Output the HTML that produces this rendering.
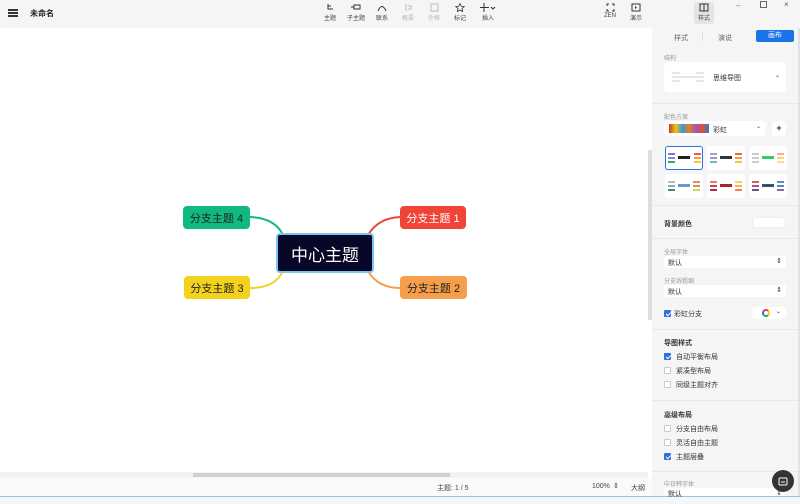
<!DOCTYPE html>
<html><head><meta charset="utf-8"><style>
*{box-sizing:border-box;margin:0;padding:0}
body{width:800px;height:504px;overflow:hidden;font-family:"Liberation Sans","Noto Sans CJK SC",sans-serif;background:#fff;position:relative;color:#333}
.a{position:absolute}
.top{left:0;top:0;width:800px;height:28px;background:#f5f5f5}
.tb{position:absolute;top:3px;font-size:6px;color:#444;text-align:center;width:20px}
.tb svg{display:block;margin:0 auto 1px}
.dis{color:#bbb}
.panel{left:652px;top:28px;width:146px;height:468px;background:#f5f5f5}
.card{position:absolute;background:#fff;border-radius:4px}
.lbl{position:absolute;font-size:6px;color:#999}
.txt{position:absolute;font-size:7px;color:#333}
.sel{position:absolute;left:12px;width:122px;height:12px;background:#fff;border-radius:3px;font-size:7px;padding:2px 4px}
.sel::after{content:"⇕";position:absolute;right:4px;top:1px;font-size:7px}
.cb{position:absolute;left:12px;width:7px;height:7px;border:1px solid #ccc;border-radius:1px;background:#fff}
.cb.on{background:#2d6fdf;border-color:#2d6fdf}
.cb.on::after{content:"";position:absolute;left:1.5px;top:0;width:2px;height:4px;border:solid #fff;border-width:0 1px 1px 0;transform:rotate(45deg)}
.sep{position:absolute;left:0;width:146px;height:1px;background:#e8e8e8}
.node{position:absolute;border-radius:4px;font-size:11px;display:flex;align-items:center;justify-content:center}
.th{position:absolute;width:38px;height:24px;background:#fff;border-radius:3px}
.th i{position:absolute;width:7px;height:2px}
</style></head><body>
<div class="a top">
 <div class="a" style="left:8px;top:9px;width:10px;height:1.5px;background:#333;box-shadow:0 3px 0 #333,0 6px 0 #333"></div>
 <div class="a" style="left:30px;top:8px;font-size:8px;font-weight:bold;color:#222">未命名</div>
 <div class="tb" style="left:320px"><svg width="9" height="9"><path d="M2 1v5h5M2 3h3" stroke="#333" fill="none"/></svg>主题</div>
 <div class="tb" style="left:346px"><svg width="10" height="9"><rect x="3" y="2" width="6" height="4" fill="none" stroke="#333"/><path d="M0 4h3" stroke="#333"/></svg>子主题</div>
 <div class="tb" style="left:372px"><svg width="10" height="9"><path d="M1 8Q5 -1 9 8" fill="none" stroke="#333"/></svg>联系</div>
 <div class="tb dis" style="left:398px"><svg width="9" height="9"><path d="M2 1v7M4 3h3v3H4" stroke="#bbb" fill="none"/></svg>概要</div>
 <div class="tb dis" style="left:424px"><svg width="9" height="9"><rect x="1" y="1" width="7" height="7" stroke="#bbb" fill="none"/></svg>外框</div>
 <div class="tb" style="left:450px"><svg width="10" height="9"><path d="M5 0.5l1.3 2.8 3 .3-2.3 2 .7 3L5 7 2.3 8.6l.7-3-2.3-2 3-.3z" fill="none" stroke="#333" stroke-width=".8"/></svg>标记</div>
 <div class="tb" style="left:478px"><svg width="16" height="9"><path d="M4 0v9M0 4.5h9M11 4l2 2 2-2" stroke="#333" fill="none"/></svg>插入</div>
 <div class="tb" style="left:600px"><svg width="9" height="9"><path d="M1 3V1h2M6 1h2v2M8 6v2H6M3 8H1V6" stroke="#333" fill="none"/></svg>ZEN</div>
 <div class="tb" style="left:626px"><svg width="10" height="9"><rect x="1" y="1" width="8" height="7" fill="none" stroke="#333"/><path d="M4 3l2 1.5-2 1.5z" fill="#333"/></svg>演示</div>
 <div class="a" style="left:694px;top:2px;width:20px;height:22px;background:#e4e4e4;border-radius:3px"></div>
 <div class="tb" style="left:694px"><svg width="10" height="9"><rect x="1" y="1" width="8" height="7" fill="none" stroke="#333"/><path d="M5 1v7" stroke="#333"/></svg>样式</div>
 <div class="a" style="left:736px;top:1px;font-size:8px;color:#777">–</div>
 <div class="a" style="left:760px;top:1px;width:7px;height:7px;border:1px solid #666"></div>
 <div class="a" style="left:784px;top:0px;font-size:8px;color:#555">×</div>
</div>
<svg class="a" style="left:0;top:28px" width="652" height="450">
 <path d="M283 207 Q275 190 250 189" stroke="#10b981" stroke-width="2" fill="none"/>
 <path d="M283 243 Q275 260 250 260" stroke="#f2d21b" stroke-width="2" fill="none"/>
 <path d="M368 207 Q378 190 400 189" stroke="#f04438" stroke-width="2" fill="none"/>
 <path d="M368 243 Q378 260 400 260" stroke="#f59e4c" stroke-width="2" fill="none"/>
</svg>
<div class="node" style="left:183px;top:206px;width:67px;height:23px;background:#10b981;color:#222">分支主题 4</div>
<div class="node" style="left:184px;top:276px;width:66px;height:23px;background:#f2d21b;color:#222">分支主题 3</div>
<div class="node" style="left:400px;top:206px;width:66px;height:23px;background:#f04438;color:#fff">分支主题 1</div>
<div class="node" style="left:400px;top:276px;width:67px;height:23px;background:#f59e4c;color:#222">分支主题 2</div>
<div class="node" style="left:276px;top:233px;width:98px;height:40px;background:#070728;color:#fff;font-size:17px;border:2px solid #7cc4f0">中心主题</div>
<div class="a" style="left:0;top:472px;width:648px;height:6px;background:#f3f3f3"></div>
<div class="a" style="left:193px;top:473px;width:257px;height:4px;background:#d0d0d0"></div>
<div class="a" style="left:648px;top:150px;width:4px;height:170px;background:#ddd"></div>
<div class="a" style="left:0;top:478px;width:652px;height:18px;background:#fafafa;font-size:7px;color:#444">
 <span class="a" style="left:437px;top:5px">主题: 1 / 5</span>
 <span class="a" style="left:592px;top:5px">100%</span>
 <span class="a" style="left:613px;top:4px">⇕</span>
 <span class="a" style="left:631px;top:5px">大纲</span>
</div>
<div class="a" style="left:0;top:496px;width:800px;height:1px;background:#9cc3e0"></div>
<div class="a" style="left:0;top:497px;width:800px;height:7px;background:#f4f6f8"></div>
<div class="a panel">
 <div class="txt" style="left:22px;top:5px;color:#666">样式</div>
 <div class="a" style="left:50px;top:5px;width:1px;height:8px;background:#ddd"></div>
 <div class="txt" style="left:66px;top:5px;color:#666">演说</div>
 <div class="a" style="left:104px;top:2px;width:38px;height:12px;background:#1a73e8;border-radius:2px;color:#fff;font-size:7px;text-align:center;line-height:12px">画布</div>
 <div class="lbl" style="left:12px;top:25px">结构</div>
 <div class="card" style="left:12px;top:34px;width:122px;height:30px">
  <svg class="a" style="left:6px;top:9px" width="36" height="12"><path d="M2 2h8M2 6h8M2 10h8M26 2h8M26 6h8M26 10h8M10 6h16" stroke="#ddd" stroke-width="1.5"/></svg>
  <div class="txt" style="left:49px;top:11px">思维导图</div>
  <div class="txt" style="left:111px;top:10px;font-size:6px">⌄</div>
 </div>
 <div class="sep" style="top:75px"></div>
 <div class="lbl" style="left:12px;top:84px">配色方案</div>
 <div class="card" style="left:12px;top:93px;width:102px;height:15px">
  <div class="a" style="left:5px;top:3px;width:40px;height:9px;background:linear-gradient(90deg,#c0392b,#f1c40f,#3498db,#e67e22,#9b59b6,#e74c3c,#2980b9)"></div>
  <div class="txt" style="left:49px;top:4px">彩虹</div>
  <div class="txt" style="left:92px;top:2px;font-size:6px">⌄</div>
 </div>
 <div class="card" style="left:120px;top:93px;width:14px;height:15px;font-size:9px;text-align:center;line-height:15px;font-weight:bold">+</div>
 <div class="th" style="left:13px;top:118px;border:1.5px solid #2d6fdf"><i style="left:2px;top:6px;background:#96c"></i><i style="left:2px;top:10px;background:#69c"></i><i style="left:2px;top:14px;background:#3a6"></i><i style="left:28px;top:6px;background:#e55"></i><i style="left:28px;top:10px;background:#f93"></i><i style="left:28px;top:14px;background:#ec3"></i><div class="a" style="left:12px;top:9px;width:12px;height:3px;background:#222"></div></div>
 <div class="th" style="left:55px;top:118px"><i style="left:3px;top:7px;background:#b9c"></i><i style="left:3px;top:11px;background:#99c"></i><i style="left:3px;top:15px;background:#6bc"></i><i style="left:28px;top:7px;background:#e64"></i><i style="left:28px;top:11px;background:#f93"></i><i style="left:28px;top:15px;background:#ec3"></i><div class="a" style="left:13px;top:10px;width:12px;height:3px;background:#334"></div></div>
 <div class="th" style="left:97px;top:118px"><i style="left:3px;top:7px;background:#ccc"></i><i style="left:3px;top:11px;background:#ccc"></i><i style="left:3px;top:15px;background:#ccc"></i><i style="left:28px;top:7px;background:#fa8"></i><i style="left:28px;top:11px;background:#fc8"></i><i style="left:28px;top:15px;background:#fd8"></i><div class="a" style="left:13px;top:10px;width:12px;height:3px;background:#3c6"></div></div>
 <div class="th" style="left:13px;top:146px"><i style="left:3px;top:7px;background:#bbc"></i><i style="left:3px;top:11px;background:#8ac"></i><i style="left:3px;top:15px;background:#486"></i><i style="left:28px;top:7px;background:#e86"></i><i style="left:28px;top:11px;background:#c94"></i><i style="left:28px;top:15px;background:#dc6"></i><div class="a" style="left:13px;top:10px;width:12px;height:3px;background:#69c"></div></div>
 <div class="th" style="left:55px;top:146px"><i style="left:3px;top:7px;background:#e76"></i><i style="left:3px;top:11px;background:#c45"></i><i style="left:3px;top:15px;background:#a34"></i><i style="left:28px;top:7px;background:#fc6"></i><i style="left:28px;top:11px;background:#fa6"></i><i style="left:28px;top:15px;background:#e84"></i><div class="a" style="left:13px;top:10px;width:12px;height:3px;background:#a23"></div></div>
 <div class="th" style="left:97px;top:146px"><i style="left:3px;top:7px;background:#c66"></i><i style="left:3px;top:11px;background:#a5a"></i><i style="left:3px;top:15px;background:#658"></i><i style="left:28px;top:7px;background:#68c"></i><i style="left:28px;top:11px;background:#58b"></i><i style="left:28px;top:15px;background:#86a"></i><div class="a" style="left:13px;top:10px;width:12px;height:3px;background:#356"></div></div>
 <div class="sep" style="top:177px"></div>
 <div class="txt" style="left:12px;top:191px;font-weight:bold">背景颜色</div>
 <div class="card" style="left:100px;top:189px;width:34px;height:11px;border:1px solid #eee"></div>
 <div class="sep" style="top:210px"></div>
 <div class="lbl" style="left:12px;top:219px">全局字体</div>
 <div class="sel" style="top:228px">默认</div>
 <div class="lbl" style="left:12px;top:248px">分支线粗细</div>
 <div class="sel" style="top:257px">默认</div>
 <div class="cb on" style="top:282px"></div>
 <div class="txt" style="left:22px;top:281px">彩虹分支</div>
 <div class="card" style="left:100px;top:279px;width:34px;height:12px">
  <div class="a" style="left:10px;top:2px;width:8px;height:8px;border-radius:50%;border:2px solid;border-color:#e33 #fc0 #3a5 #36f"></div>
  <div class="txt" style="left:24px;top:1px;font-size:6px">⌄</div>
 </div>
 <div class="sep" style="top:301px"></div>
 <div class="txt" style="left:12px;top:310px;font-weight:bold">导图样式</div>
 <div class="cb on" style="top:325px"></div><div class="txt" style="left:24px;top:324px">自动平衡布局</div>
 <div class="cb" style="top:339px"></div><div class="txt" style="left:24px;top:338px">紧凑型布局</div>
 <div class="cb" style="top:353px"></div><div class="txt" style="left:24px;top:352px">同级主题对齐</div>
 <div class="sep" style="top:372px"></div>
 <div class="txt" style="left:12px;top:382px;font-weight:bold">高级布局</div>
 <div class="cb" style="top:397px"></div><div class="txt" style="left:24px;top:396px">分支自由布局</div>
 <div class="cb" style="top:411px"></div><div class="txt" style="left:24px;top:410px">灵活自由主题</div>
 <div class="cb on" style="top:425px"></div><div class="txt" style="left:24px;top:424px">主题层叠</div>
 <div class="sep" style="top:443px"></div>
 <div class="lbl" style="left:12px;top:451px">中日韩字体</div>
 <div class="sel" style="top:460px;height:8px;padding-top:1px">默认</div>
 <div class="a" style="left:120px;top:442px;width:22px;height:22px;border-radius:50%;background:#333"><svg class="a" style="left:6px;top:6px" width="10" height="10"><rect x="1" y="2" width="8" height="7" rx="1" fill="none" stroke="#fff"/><path d="M3 6h4" stroke="#fff"/></svg></div>
</div>
<div class="a" style="left:798px;top:28px;width:2px;height:468px;background:#dfe3e8"></div>
</body></html>
